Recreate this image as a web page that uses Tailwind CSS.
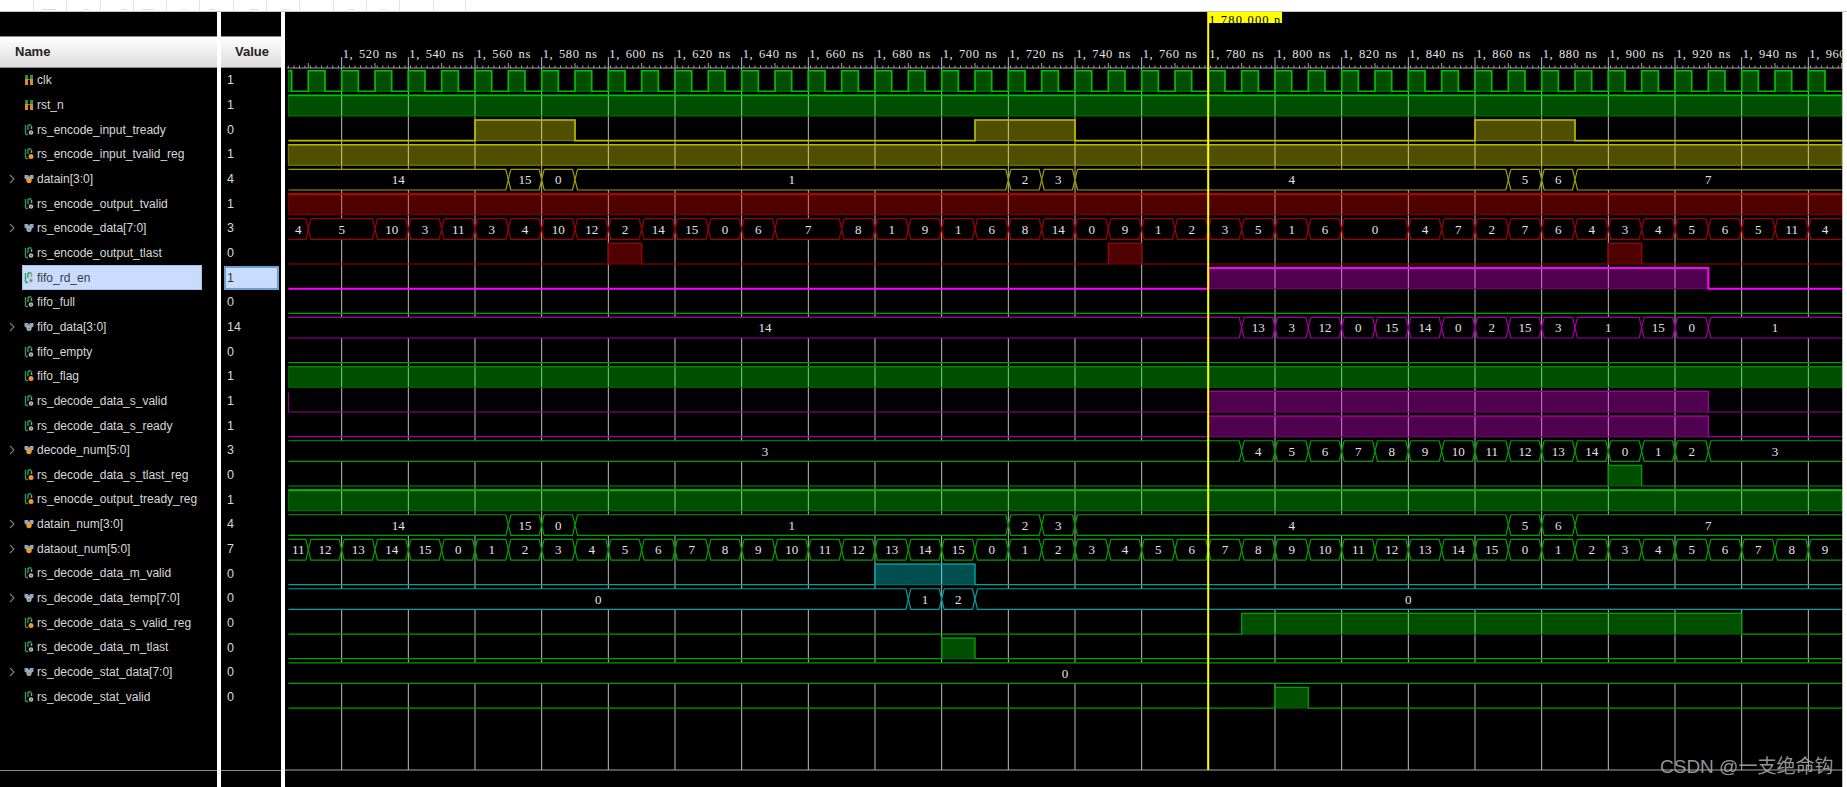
<!DOCTYPE html>
<html lang="en">
<head>
    <meta charset="UTF-8">
    <title>Vivado Waveform</title>
    <script src="https://cdn.jsdelivr.net/npm/@tailwindcss/browser@4"></script>
</head>
<body class="bg-white overflow-hidden font-['Liberation_Sans',sans-serif]">
    <!-- signal icons -->
    <svg class="hidden">
        <symbol id="ic-in" viewBox="0 0 10 12">
            <path d="M1 1h3v5H1zM6 1h3v5H6z" fill="#2f8f3f"/><path d="M1 5h3v6H1zM6 5h3v6H6z" fill="#e08a20"/><path d="M4 5h2v1H4z" fill="#6d7f45"/>
        </symbol>
        <symbol id="ic-sig" viewBox="0 0 10 12">
            <path d="M1.500 1v9M1.500 10.500h2.500M4 1h3.500" stroke="#2f9a58" stroke-width="1.400" fill="none"/><path d="M4 1v5" stroke="#2f9a58" stroke-width="1.400"/><path d="M7.500 2v3" stroke="#8aa08f" stroke-width="1.500"/><circle cx="7" cy="8.500" r="2.300" fill="#b8b8b8"/><circle cx="7" cy="8.500" r="1" fill="#777"/>
        </symbol>
        <symbol id="ic-reg" viewBox="0 0 10 12">
            <path d="M1.500 1v9M1.500 10.500h2.500M4 1h3.500" stroke="#2f9a58" stroke-width="1.400" fill="none"/><path d="M4 1v5" stroke="#2f9a58" stroke-width="1.400"/><path d="M7.500 2v3" stroke="#8aa08f" stroke-width="1.500"/><circle cx="7" cy="8.500" r="2.500" fill="#f0962a"/>
        </symbol>
        <symbol id="ic-bus" viewBox="0 0 10 10">
            <path d="M0.500 1h3.500l1 2 1-2h3.500v3.500l-2.500 1.500h-4l-2.500-1.500z" fill="#8fa6c4"/><circle cx="5" cy="6.500" r="2.500" fill="#b4b4b4"/><circle cx="5" cy="6.500" r="1" fill="#777"/>
        </symbol>
        <symbol id="ic-busreg" viewBox="0 0 10 10">
            <path d="M0.500 1h3.500l1 2 1-2h3.500v3.500l-2.500 1.500h-4l-2.500-1.500z" fill="#8fa6c4"/><circle cx="5" cy="6.500" r="2.700" fill="#f0962a"/>
        </symbol>
        <symbol id="ic-chev" viewBox="0 0 6 10">
            <path d="M1 1l4 4-4 4" stroke="#7d7d7d" stroke-width="1.100" fill="none"/>
        </symbol>
    </svg>

    <div class="relative w-[1847px] h-[787px]">
        <!-- toolbar -->
        <div class="flex h-[12px] border-b border-[#c8c8c8] bg-white pl-[33px]">
            <div class="relative w-[33.3px] border-l border-[#e4e4e4]"><span class="absolute left-[8px] bottom-[1px] w-[14px] h-[1px] bg-[#d3dcee]"></span></div>
            <div class="relative w-[33.3px] border-l border-[#e4e4e4]"><span class="absolute left-[16px] bottom-[1px] w-[6px] h-[1px] bg-[#e2e2e2]"></span></div>
            <div class="relative w-[33.3px] border-l border-[#e4e4e4]"><span class="absolute left-[20px] bottom-[1px] w-[6px] h-[1px] bg-[#e2e2e2]"></span></div>
            <div class="relative w-[33.3px] border-l border-[#e4e4e4]"><span class="absolute left-[8px] bottom-[1px] w-[12px] h-[1px] bg-[#dbe0f0]"></span></div>
            <div class="relative w-[33.3px] border-l border-[#e4e4e4]"><span class="absolute left-[14px] bottom-[1px] w-[5px] h-[1px] bg-[#f6e8bd]"></span></div>
            <div class="relative w-[33.3px] border-l border-[#e4e4e4]"><span class="absolute left-[9px] bottom-[1px] w-[6px] h-[1px] bg-[#d3dcee]"></span></div>
            <div class="relative w-[33.3px] border-l border-[#e4e4e4]"><span class="absolute left-[16px] bottom-[1px] w-[8px] h-[1px] bg-[#dedbee]"></span></div>
            <div class="relative w-[33.3px] border-l border-[#e4e4e4]"><span class="absolute left-[14px] bottom-[1px] w-[10px] h-[1px] bg-[#e0eee4]"></span></div>
            <div class="relative w-[33.3px] border-l border-[#e4e4e4]"></div>
            <div class="relative w-[33.3px] border-l border-[#e4e4e4]"><span class="absolute left-[15px] bottom-[1px] w-[5px] h-[1px] bg-[#d3e0f1]"></span></div>
            <div class="relative w-[33.3px] border-l border-[#e4e4e4]"><span class="absolute left-[12px] bottom-[1px] w-[8px] h-[1px] bg-[#e8e8e8]"></span></div>
            <div class="relative w-[33.3px] border-l border-[#e4e4e4]"></div>
            <div class="w-[33.3px] border-l border-r border-[#e4e4e4]"></div>
        </div>

        <div class="flex h-[775px]">
            <!-- name column -->
            <div class="flex flex-col w-[217px] bg-black">
                <div class="h-[24px] shrink-0"></div>
                <div class="flex items-center h-[32px] shrink-0 pl-[15px] text-[13px] font-bold text-[#222] bg-gradient-to-b from-white to-[#dcdcdc] border-y border-[#8c8c8c]">Name</div>
                <div class="flex flex-col flex-1 text-[12px] text-[#d8d8d8]">
                    <div class="flex items-center h-[24.67px] pl-[24px] gap-[3px]"><svg class="w-[10px] h-[12px] shrink-0"><use href="#ic-in"/></svg>clk</div>
                    <div class="flex items-center h-[24.67px] pl-[24px] gap-[3px]"><svg class="w-[10px] h-[12px] shrink-0"><use href="#ic-in"/></svg>rst_n</div>
                    <div class="flex items-center h-[24.67px] pl-[24px] gap-[3px]"><svg class="w-[10px] h-[12px] shrink-0"><use href="#ic-sig"/></svg>rs_encode_input_tready</div>
                    <div class="flex items-center h-[24.67px] pl-[24px] gap-[3px]"><svg class="w-[10px] h-[12px] shrink-0"><use href="#ic-reg"/></svg>rs_encode_input_tvalid_reg</div>
                    <div class="flex items-center h-[24.67px] pl-[9px] gap-[3px]"><svg class="w-[6px] h-[10px] shrink-0 mr-[6px]"><use href="#ic-chev"/></svg><svg class="w-[10px] h-[10px] shrink-0"><use href="#ic-busreg"/></svg>datain[3:0]</div>
                    <div class="flex items-center h-[24.67px] pl-[24px] gap-[3px]"><svg class="w-[10px] h-[12px] shrink-0"><use href="#ic-sig"/></svg>rs_encode_output_tvalid</div>
                    <div class="flex items-center h-[24.67px] pl-[9px] gap-[3px]"><svg class="w-[6px] h-[10px] shrink-0 mr-[6px]"><use href="#ic-chev"/></svg><svg class="w-[10px] h-[10px] shrink-0"><use href="#ic-bus"/></svg>rs_encode_data[7:0]</div>
                    <div class="flex items-center h-[24.67px] pl-[24px] gap-[3px]"><svg class="w-[10px] h-[12px] shrink-0"><use href="#ic-sig"/></svg>rs_encode_output_tlast</div>
                    <div class="h-[24.67px] pl-[22px] pr-[15px]"><div class="flex items-center h-full pl-[1px] gap-[3px] bg-[#c9dcfd] border border-[#a9c3e6] text-[#3a3a3a]"><svg class="w-[10px] h-[12px] shrink-0"><use href="#ic-sig"/></svg>fifo_rd_en</div></div>
                    <div class="flex items-center h-[24.67px] pl-[24px] gap-[3px]"><svg class="w-[10px] h-[12px] shrink-0"><use href="#ic-sig"/></svg>fifo_full</div>
                    <div class="flex items-center h-[24.67px] pl-[9px] gap-[3px]"><svg class="w-[6px] h-[10px] shrink-0 mr-[6px]"><use href="#ic-chev"/></svg><svg class="w-[10px] h-[10px] shrink-0"><use href="#ic-bus"/></svg>fifo_data[3:0]</div>
                    <div class="flex items-center h-[24.67px] pl-[24px] gap-[3px]"><svg class="w-[10px] h-[12px] shrink-0"><use href="#ic-sig"/></svg>fifo_empty</div>
                    <div class="flex items-center h-[24.67px] pl-[24px] gap-[3px]"><svg class="w-[10px] h-[12px] shrink-0"><use href="#ic-reg"/></svg>fifo_flag</div>
                    <div class="flex items-center h-[24.67px] pl-[24px] gap-[3px]"><svg class="w-[10px] h-[12px] shrink-0"><use href="#ic-sig"/></svg>rs_decode_data_s_valid</div>
                    <div class="flex items-center h-[24.67px] pl-[24px] gap-[3px]"><svg class="w-[10px] h-[12px] shrink-0"><use href="#ic-sig"/></svg>rs_decode_data_s_ready</div>
                    <div class="flex items-center h-[24.67px] pl-[9px] gap-[3px]"><svg class="w-[6px] h-[10px] shrink-0 mr-[6px]"><use href="#ic-chev"/></svg><svg class="w-[10px] h-[10px] shrink-0"><use href="#ic-busreg"/></svg>decode_num[5:0]</div>
                    <div class="flex items-center h-[24.67px] pl-[24px] gap-[3px]"><svg class="w-[10px] h-[12px] shrink-0"><use href="#ic-reg"/></svg>rs_decode_data_s_tlast_reg</div>
                    <div class="flex items-center h-[24.67px] pl-[24px] gap-[3px]"><svg class="w-[10px] h-[12px] shrink-0"><use href="#ic-reg"/></svg>rs_enocde_output_tready_reg</div>
                    <div class="flex items-center h-[24.67px] pl-[9px] gap-[3px]"><svg class="w-[6px] h-[10px] shrink-0 mr-[6px]"><use href="#ic-chev"/></svg><svg class="w-[10px] h-[10px] shrink-0"><use href="#ic-busreg"/></svg>datain_num[3:0]</div>
                    <div class="flex items-center h-[24.67px] pl-[9px] gap-[3px]"><svg class="w-[6px] h-[10px] shrink-0 mr-[6px]"><use href="#ic-chev"/></svg><svg class="w-[10px] h-[10px] shrink-0"><use href="#ic-busreg"/></svg>dataout_num[5:0]</div>
                    <div class="flex items-center h-[24.67px] pl-[24px] gap-[3px]"><svg class="w-[10px] h-[12px] shrink-0"><use href="#ic-sig"/></svg>rs_decode_data_m_valid</div>
                    <div class="flex items-center h-[24.67px] pl-[9px] gap-[3px]"><svg class="w-[6px] h-[10px] shrink-0 mr-[6px]"><use href="#ic-chev"/></svg><svg class="w-[10px] h-[10px] shrink-0"><use href="#ic-bus"/></svg>rs_decode_data_temp[7:0]</div>
                    <div class="flex items-center h-[24.67px] pl-[24px] gap-[3px]"><svg class="w-[10px] h-[12px] shrink-0"><use href="#ic-reg"/></svg>rs_decode_data_s_valid_reg</div>
                    <div class="flex items-center h-[24.67px] pl-[24px] gap-[3px]"><svg class="w-[10px] h-[12px] shrink-0"><use href="#ic-sig"/></svg>rs_decode_data_m_tlast</div>
                    <div class="flex items-center h-[24.67px] pl-[9px] gap-[3px]"><svg class="w-[6px] h-[10px] shrink-0 mr-[6px]"><use href="#ic-chev"/></svg><svg class="w-[10px] h-[10px] shrink-0"><use href="#ic-bus"/></svg>rs_decode_stat_data[7:0]</div>
                    <div class="flex items-center h-[24.67px] pl-[24px] gap-[3px]"><svg class="w-[10px] h-[12px] shrink-0"><use href="#ic-sig"/></svg>rs_decode_stat_valid</div>
                </div>
                <div class="h-[17px] shrink-0 border-t border-[#8c8c8c]"></div>
            </div>

            <div class="w-[4px] bg-white"></div>

            <!-- value column -->
            <div class="flex flex-col w-[60px] bg-black">
                <div class="h-[24px] shrink-0"></div>
                <div class="flex items-center justify-center h-[32px] shrink-0 pl-[2px] text-[13px] font-bold text-[#222] bg-gradient-to-b from-white to-[#dcdcdc] border-y border-[#8c8c8c]">Value</div>
                <div class="flex flex-col flex-1 pt-[0.5px] text-[12.5px] text-[#d8d8d8]">
                    <div class="flex items-center h-[24.67px] pl-[6px]">1</div>
                    <div class="flex items-center h-[24.67px] pl-[6px]">1</div>
                    <div class="flex items-center h-[24.67px] pl-[6px]">0</div>
                    <div class="flex items-center h-[24.67px] pl-[6px]">1</div>
                    <div class="flex items-center h-[24.67px] pl-[6px]">4</div>
                    <div class="flex items-center h-[24.67px] pl-[6px]">1</div>
                    <div class="flex items-center h-[24.67px] pl-[6px]">3</div>
                    <div class="flex items-center h-[24.67px] pl-[6px]">0</div>
                    <div class="h-[24.67px] pl-[3px] pr-[2px]"><div class="flex items-center h-full pl-[1px] bg-[#c9dcfd] border-2 border-[#6a9fd0] text-[#333]">1</div></div>
                    <div class="flex items-center h-[24.67px] pl-[6px]">0</div>
                    <div class="flex items-center h-[24.67px] pl-[6px]">14</div>
                    <div class="flex items-center h-[24.67px] pl-[6px]">0</div>
                    <div class="flex items-center h-[24.67px] pl-[6px]">1</div>
                    <div class="flex items-center h-[24.67px] pl-[6px]">1</div>
                    <div class="flex items-center h-[24.67px] pl-[6px]">1</div>
                    <div class="flex items-center h-[24.67px] pl-[6px]">3</div>
                    <div class="flex items-center h-[24.67px] pl-[6px]">0</div>
                    <div class="flex items-center h-[24.67px] pl-[6px]">1</div>
                    <div class="flex items-center h-[24.67px] pl-[6px]">4</div>
                    <div class="flex items-center h-[24.67px] pl-[6px]">7</div>
                    <div class="flex items-center h-[24.67px] pl-[6px]">0</div>
                    <div class="flex items-center h-[24.67px] pl-[6px]">0</div>
                    <div class="flex items-center h-[24.67px] pl-[6px]">0</div>
                    <div class="flex items-center h-[24.67px] pl-[6px]">0</div>
                    <div class="flex items-center h-[24.67px] pl-[6px]">0</div>
                    <div class="flex items-center h-[24.67px] pl-[6px]">0</div>
                </div>
                <div class="h-[17px] shrink-0 border-t border-[#8c8c8c]"></div>
            </div>

            <div class="w-[4px] bg-white"></div>

            <!-- wave canvas -->
            <div class="relative w-[1557px] bg-black overflow-hidden">
                <svg id="waves" class="block w-[1557px] h-[775px] font-['Liberation_Serif',serif]" viewBox="285 12 1557 775"></svg>
                <div class="absolute left-[923px] top-0 w-[74px] h-[11px] pl-[1px] overflow-hidden bg-[#ffff00] text-black text-[12.5px] leading-[16px] tracking-[1.2px] whitespace-nowrap font-['Liberation_Serif',serif]">1,780.000 ns</div>
            </div>
            <div class="w-[5px] bg-white border-l border-[#bbb]"></div>
        </div>

        <div class="absolute left-[1660px] top-[755px] text-[19px] leading-[24px] text-[#a8a8a8]/90 whitespace-nowrap font-['Liberation_Sans','Noto_Sans_CJK_SC',sans-serif]">CSDN @一支绝命钩</div>
    </div>

    <script>
        // wave geometry: page coordinates, 10 ns = 33.33 px
        const X = t => 341.67 + (t - 1520) * 10 / 3;
        const hi = i => 70.7 + 24.67 * i;
        const lo = i => 91.3 + 24.67 * i;
        const T0 = 1504, T1 = 1970;
        let out = '';

        const GREEN = { line: '#00c000', dim: '#007800', fill: '#00ff00', w: 1.6 };
        const GREEN2 = { line: '#00a000', dim: '#006800', fill: '#00ff00', w: 1.2 };
        const YELLOW = { line: '#b8b800', dim: '#808000', fill: '#ffff00', w: 1.6 };
        const RED = { line: '#e00000', dim: '#800000', fill: '#ff0000', w: 1.6 };
        const DKRED = { line: '#a00000', dim: '#800000', fill: '#ff0000', w: 1.2 };
        const MAG = { line: '#ff00ff', dim: '#800080', fill: '#ff00ff', w: 2 };
        const PURP = { line: '#a000a0', dim: '#800080', fill: '#ff00ff', w: 1.2 };
        const TEAL = { line: '#00a0a0', dim: '#007878', fill: '#00ffff', w: 1.2 };

        // grid, ruler
        for (let t = 1520; t <= 1960; t += 20) {
            out += `<line x1="${X(t)}" x2="${X(t)}" y1="57" y2="770" stroke="#bdbdbd"/>`;
            const s = String(t);
            out += `<text x="${X(t) + 1}" y="58" fill="#e4e4e4" font-size="12.500" letter-spacing="0.600" word-spacing="2">1, ${s.slice(1)} ns</text>`;
        }
        out += `<line x1="287" x2="1842" y1="68" y2="68" stroke="#a0a0a0"/>`;
        for (let t = 1504; t <= 1970; t += 10 / 6) {
            out += `<line x1="${X(t)}" x2="${X(t)}" y1="65.500" y2="68" stroke="#a0a0a0"/>`;
        }
        for (let t = 1510; t <= 1970; t += 20) {
            out += `<line x1="${X(t)}" x2="${X(t)}" y1="63" y2="68" stroke="#a0a0a0"/>`;
        }
        out += `<line x1="285" x2="1842" y1="770" y2="770" stroke="#a8a8a8"/>`;

        // scalar rows: list of [from, to] high spans
        function bit(i, c, spans, opt = {}) {
            const h = hi(i), l = lo(i);
            let d = `M${X(T0)} ${spans.length && spans[0][0] <= T0 ? h : l}`;
            spans.forEach(([a, b]) => {
                out += `<rect x="${X(a)}" y="${h}" width="${X(b) - X(a)}" height="${l - h}" fill="${c.fill}" fill-opacity="0.31" stroke="${c.dim}"/>`;
                if (a > T0) d += `H${X(a)}V${h}`;
                d += `H${X(b)}`;
                if (b < T1) d += `V${l}`;
            });
            if (!spans.length || spans[spans.length - 1][1] < T1) d += `H${X(T1)}`;
            out += `<path d="${d}" fill="none" stroke="${c.line}" stroke-width="${c.w}"/>`;
            if (opt.edge) out += `<line x1="${X(T0)}" x2="${X(T0)}" y1="${h}" y2="${l}" stroke="${c.line}"/>`;
        }

        // bus rows: list of [end time, label]; black fill hides the grid
        function bus(i, c, segs) {
            const h = hi(i), l = lo(i), m = (h + l) / 2;
            let a = T0;
            segs.forEach(([b, label]) => {
                const ca = a === T0 ? 0 : 2.500, cb = b === T1 ? 0 : 2.500;
                const x0 = X(a), x1 = X(b);
                out += `<path d="M${x0 + ca} ${h}H${x1 - cb}L${x1} ${m}L${x1 - cb} ${l}H${x0 + ca}L${x0} ${m}Z" fill="#000" stroke="none"/>`;
                let d = `M${x0 + ca} ${h}H${x1 - cb}`;
                if (b < T1) d += `L${x1} ${m}L${x1 - cb} ${l}`; else d += `M${x1} ${l}`;
                d += `H${x0 + ca}`;
                if (a > T0) d += `L${x0} ${m}L${x0 + ca} ${h}`;
                out += `<path d="${d}" fill="none" stroke="${c.line}" stroke-width="${c.w}"/>`;
                out += `<text x="${(x0 + x1) / 2}" y="${m + 4.500}" fill="#e4e4e4" font-size="13" text-anchor="middle">${label}</text>`;
                a = b;
            });
        }

        const clk = [];
        for (let t = 1500; t < T1; t += 10) clk.push([Math.max(t, T0), t + 5]);

        const datain = [[1570, 14], [1580, 15], [1590, 0], [1720, 1], [1730, 2], [1740, 3], [1870, 4], [1880, 5], [1890, 6], [T1, 7]];
        const encData = [[1510, 4], [1530, 5], [1540, 10], [1550, 3], [1560, 11], [1570, 3], [1580, 4], [1590, 10], [1600, 12], [1610, 2], [1620, 14], [1630, 15], [1640, 0], [1650, 6], [1670, 7], [1680, 8], [1690, 1], [1700, 9], [1710, 1], [1720, 6], [1730, 8], [1740, 14], [1750, 0], [1760, 9], [1770, 1], [1780, 2], [1790, 3], [1800, 5], [1810, 1], [1820, 6], [1840, 0], [1850, 4], [1860, 7], [1870, 2], [1880, 7], [1890, 6], [1900, 4], [1910, 3], [1920, 4], [1930, 5], [1940, 6], [1950, 5], [1960, 11], [T1, 4]];
        const fifoData = [[1790, 14], [1800, 13], [1810, 3], [1820, 12], [1830, 0], [1840, 15], [1850, 14], [1860, 0], [1870, 2], [1880, 15], [1890, 3], [1910, 1], [1920, 15], [1930, 0], [T1, 1]];
        const decNum = [[1790, 3], [1800, 4], [1810, 5], [1820, 6], [1830, 7], [1840, 8], [1850, 9], [1860, 10], [1870, 11], [1880, 12], [1890, 13], [1900, 14], [1910, 0], [1920, 1], [1930, 2], [T1, 3]];
        const outNum = [[1510, 11]];
        for (let t = 1520, v = 12; t <= T1; t += 10, v++) outNum.push([t, v % 16]);

        bit(0, GREEN, clk);
        bit(1, GREEN, [[T0, T1]]);
        bit(2, YELLOW, [[1560, 1590], [1710, 1740], [1860, 1890]]);
        bit(3, YELLOW, [[T0, T1]]);
        bus(4, { line: '#a0a000', w: 1.2 }, datain);
        bit(5, RED, [[T0, T1]]);
        bus(6, DKRED, encData);
        bit(7, DKRED, [[1600, 1610], [1750, 1760], [1900, 1910]]);
        bit(8, MAG, [[1780, 1930]]);
        bit(9, GREEN2, []);
        bus(10, PURP, fifoData);
        bit(11, GREEN2, []);
        bit(12, GREEN2, [[T0, T1]]);
        bit(13, PURP, [[1780, 1930]], { edge: true });
        bit(14, PURP, [[1780, 1930]]);
        bus(15, GREEN2, decNum);
        bit(16, GREEN2, [[1900, 1910]]);
        bit(17, GREEN, [[T0, T1]]);
        bus(18, GREEN2, datain);
        bus(19, GREEN2, outNum);
        bit(20, TEAL, [[1680, 1710]]);
        bus(21, TEAL, [[1690, 0], [1700, 1], [1710, 2], [T1, 0]]);
        bit(22, GREEN2, [[1790, 1940]]);
        bit(23, GREEN2, [[1700, 1710]]);
        bus(24, GREEN2, [[T1, 0]]);
        bit(25, GREEN2, [[1800, 1810]]);

        // cursor
        out += `<line x1="1208.200" x2="1208.200" y1="12" y2="770" stroke="#ffff00" stroke-width="2"/>`;
        document.getElementById('waves').innerHTML = out;
    </script>
</body>
</html>
